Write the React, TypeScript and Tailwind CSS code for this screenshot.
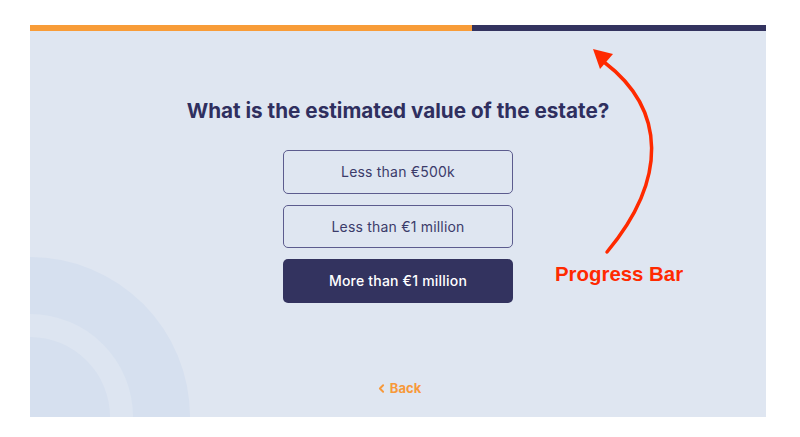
import { ChevronLeft } from "lucide-react";

const options = ["Less than €500k", "Less than €1 million", "More than €1 million"];

export default function App() {
  const selected = 2;

  return (
    <div className="relative w-[800px] h-[437px] bg-white overflow-hidden font-['Inter',sans-serif]">
      <div className="relative ml-[30px] mt-[25px] w-[736px] h-[392px] bg-[#dfe6f1] overflow-hidden">
        {/* decorative rings, bottom left */}
        <div className="absolute left-[-160px] bottom-[-160px] w-[320px] h-[320px] rounded-full bg-[#d6e0ef]" />
        <div className="absolute left-[-103px] bottom-[-103px] w-[206px] h-[206px] rounded-full bg-[#dde5f1]" />
        <div className="absolute left-[-80px] bottom-[-80px] w-[160px] h-[160px] rounded-full bg-[#d6e0ef]" />

        {/* progress bar */}
        <div className="relative flex h-[6px]">
          <div className="w-[442px] bg-[#f89c38]" />
          <div className="flex-1 bg-[#33335f]" />
        </div>

        <div className="relative flex flex-col items-center pt-[66px]">
          <h1 className="text-[20.7px] leading-7 font-bold text-[#2f2f5f]">
            What is the estimated value of the estate?
          </h1>

          <div className="mt-[25px] flex flex-col gap-[11px]">
            {options.map((label, i) => (
              <button
                key={label}
                className={
                  i === selected
                    ? "w-[230px] h-[43.5px] rounded-[5px] bg-[#33335f] text-white text-[14px] tracking-[0.2px] font-medium"
                    : "w-[230px] h-[43.5px] rounded-[5px] border border-[#5c5c8e] text-[#3b3b6a] text-[14px] tracking-[0.2px]"
                }
              >
                {label}
              </button>
            ))}
          </div>

          <button className="mt-[76px] flex items-center gap-[2px] text-[#f7993a] text-[13px] font-bold">
            <ChevronLeft size={13} strokeWidth={3.5} />
            Back
          </button>
        </div>
      </div>

      {/* annotation */}
      <svg className="absolute inset-0 pointer-events-none" width="800" height="437" viewBox="0 0 800 437">
        <path d="M607 252 C667 180 667 110 604 62" fill="none" stroke="#ff2a00" strokeWidth="3.5" strokeLinecap="round" />
        <polygon points="593,49 613,54 600,69" fill="#ff2a00" />
      </svg>
      <div className="absolute left-[555px] top-[262px] text-[20.4px] font-bold text-[#ff2a00] leading-6 font-['Liberation_Sans',sans-serif]">
        Progress Bar
      </div>
    </div>
  );
}
